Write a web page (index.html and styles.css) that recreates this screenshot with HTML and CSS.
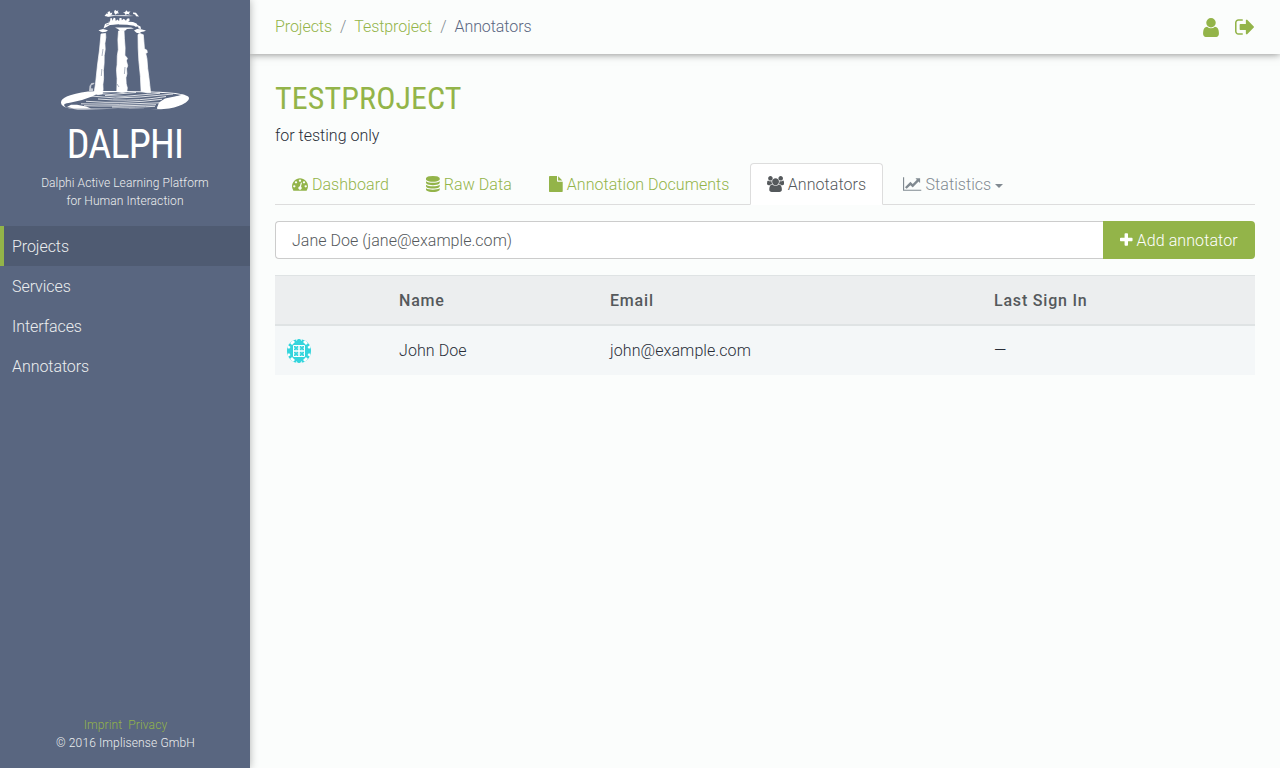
FILE: index.html
```html
<!DOCTYPE html>
<html lang="en">
<head>
<meta charset="utf-8">
<title>Testproject – Annotators</title>
<link rel="stylesheet" href="styles.css">
</head>
<body>
<aside class="sidebar">
  <svg class="logo" viewBox="0 0 150 120" width="150" height="120">
    <g fill="#fff">
    <path d="M54.500 16l2-2.500 1.500.3-.5-1.800 2.500-.8.300 2 2-.6-.5 2-2 .6 1.500.8-4 .4zM64 12l1-2.300 1.500 1.300 2-.6-.8 1.600 1.500 1.300-2.200.2-1.500 1.200-1-1.500zM73 12l2 .2 1.200-2 1.500 1.600 2.800-.3-1.600 1.700 1 1.300-2.800-.6-1.500 1-1-1.600zM83 12.500l3 .3 1.500 2 1.500 1.700-3-.3-.8-1.700-2-.4z"/>
    <path d="M56 15l3-.8 6 1 10-.2 9 1-5 .3-15-.4-6 1z" opacity=".75"/>
    <path d="M58 22l2-.5.5-3.500 1.500.3.500 2.500 1.200-3 1.500.3.600 3 1.500-1.600 1.800 1.600.4-3 2-.2.300 2.400 2-1.500 2.200 2 1-2 2.200-.6.500 2.400-1.700 1.500z"/>
    <path d="M53.500 28.500l1.500-4.600 5-1.800 12-.8 11 .8 3.500 1.400 1 1.500 3 1.500.5 2.500-2.500-.4-.4-2-2.600.2-1.500-1-7-1-9-.4-8 .7-3.500 2z"/>
    <path d="M48.500 30.300l4.500-1.300 5 1.200-2 1.500-3.500.5-2-.6zM65 27.500h16l3 1-7 .4-2 1.800-5 .2-2-2zM84 30.500l3-1.500 4 .3 5 1.200-2 1-3 .4-1.500 1.500-3-.6z"/>
    <g stroke="#fff" stroke-width=".7" stroke-linejoin="round">
    <path d="M51 34l4.600-.6.2 4-.9 6 .3 6-1 6-.1 8-.7 7 .2 8-.7 6 .2 5-.8 4.500-4.500.8-3.800-1.700 1.500-9 2-19 2-15z"/>
    <path d="M68.500 31l5.500-.2.4 8 .7 9-.2 7.500 2.500 3-1 2.500 1.300 5-1.200 3 .4 5-1 4 .3 6 1.100 4-.5 4-4.500.7-5.500-.8.200-9 .1-4-.6-9 .6-5 .2-9 1-6-.4-10z"/>
    <path d="M88 34.500l2-1 3.300 1.200.6 7 .5 7 2.500 1.500.4 2.400-1.600.8 1.200 5 .8 10 1.200 9 .9 8 .8 7.200-3.500.2-6-1.500-.7-15-1.500-15-.7-13z"/>
    </g>
    <path d="M39 91l.5-5 2-3 3-.3-.3 1.300-2.800 1.200-.4 3 2.200.2-.3 2.500z" opacity=".65"/>
    <path fill-rule="evenodd" d="M11 102.500c0-4.500 8-8.500 27-11l14-.5 22 0 28 .5c20 .6 37 2.500 37 6.500 0 5-13 10.700-28 11.200l-32-.7-44 1c-15 .3-24-2-24-7zm3.500 1.500c-1.500 3 3 4.500 11 4.600l53 .1 28.500.2 1-3 4-3.500 6-3.500 14-4-10-1.500-18-1-28-.4-26 .5-8 4-10 3.500-11 2.500c-4 .5-5.500 1-6.500 1.500z"/>
    <path d="M17 107l4-2.300 6 .1 9 1.800 5 2H24zM132 95l-17 3.500-6 4-2 5.500 14-.5 12-4 5-5z"/>
    </g>
    <g fill="none" stroke="#fff" stroke-width=".8">
    <path d="M43 93l18 1.500 25-2M41 96q24 3.500 49 1l33-3M48 99q30 2.500 54-.5l14-2M36 101.300q38 3 76-2M31 103.800q38 1.500 78-1M34 105.700q28 1 72-1M62 107q25 .5 43-.7M55 95.500l20 .8 35-3"/>
    </g>
    <g fill="none" stroke="#596680" stroke-width=".5">
    <path d="M53 49l-1 7M51.800 69l-.5 7M75 67l-.6 7M67 84l2 3M56 25l3-1M62 25.700l7-1.200"/>
    </g>
  </svg>
  <h1 class="brand">DALPHI</h1>
  <p class="tagline">Dalphi Active Learning Platform<br>for Human Interaction</p>
  <nav class="menu">
    <a class="menu-item active">Projects</a>
    <a class="menu-item">Services</a>
    <a class="menu-item">Interfaces</a>
    <a class="menu-item">Annotators</a>
  </nav>
  <footer class="foot"><div class="foot-links"><a>Imprint</a><a>Privacy</a></div>© 2016 Implisense GmbH</footer>
</aside>
<div class="page">
  <header class="topbar">
    <nav class="crumbs"><a>Projects</a><i>/</i><a>Testproject</a><i>/</i><span>Annotators</span></nav>
    <div class="actions">
      <svg viewBox="256 128 1280 1536" width="16" height="19"><path d="M1536 1399q0 109-62.500 187t-150.500 78h-854q-88 0-150.500-78t-62.500-187q0-85 8.500-160.500t31.500-152 58.500-131 94-89 134.500-34.500q131 128 313 128t313-128q76 0 134.500 34.500t94 89 58.500 131 31.500 152 8.500 160.500zm-256-887q0 159-112.500 271.500t-271.500 112.500-271.500-112.500-112.500-271.500 112.500-271.500 271.500-112.500 271.500 112.500 112.500 271.500z"/></svg>
      <svg viewBox="64 256 1568 1280" width="19" height="16"><path d="M704 1440q0 4 1 20t.5 26.500-3 23.500-10 19.500-20.500 6.500h-320q-119 0-203.500-84.500t-84.500-203.500v-704q0-119 84.500-203.500t203.500-84.500h320q13 0 22.500 9.500t9.500 22.500q0 4 1 20t.5 26.500-3 23.500-10 19.500-20.500 6.500h-320q-66 0-113 47t-47 113v704q0 66 47 113t113 47h312l11.500 1 11.500 3 8 5.500 7 9 2 13.500zm928-544q0 26-19 45l-544 544q-19 19-45 19t-45-19-19-45v-288h-448q-26 0-45-19t-19-45v-384q0-26 19-45t45-19h448v-288q0-26 19-45t45-19 45 19l544 544q19 19 19 45z"/></svg>
    </div>
  </header>
  <main class="content">
    <h2 class="title">TESTPROJECT</h2>
    <p class="lead">for testing only</p>
    <nav class="tabs">
      <a class="tab"><svg viewBox="0 0 1792 1792" width="16" height="16"><path d="M384 1152q0-53-37.500-90.500t-90.500-37.500-90.500 37.500-37.500 90.500 37.500 90.500 90.500 37.500 90.500-37.500 37.500-90.500zm192-448q0-53-37.500-90.500t-90.500-37.500-90.500 37.500-37.500 90.500 37.500 90.500 90.500 37.500 90.500-37.500 37.500-90.500zm428 481l101-382q6-26-7.500-48.500t-38.500-29.500-48 6.500-30 39.500l-101 382q-60 5-107 43.500t-63 98.500q-20 77 20 146t117 89 146-20 89-117q16-60-6-117t-72-91zm660-33q0-53-37.500-90.500t-90.500-37.500-90.500 37.500-37.500 90.500 37.500 90.500 90.500 37.500 90.500-37.500 37.500-90.500zm-640-640q0-53-37.500-90.500t-90.500-37.500-90.500 37.500-37.500 90.500 37.500 90.500 90.500 37.500 90.500-37.500 37.500-90.500zm448 192q0-53-37.500-90.500t-90.500-37.500-90.500 37.500-37.500 90.500 37.500 90.500 90.500 37.500 90.500-37.500 37.500-90.500zm320 448q0 261-141 483-19 29-54 29h-1402q-35 0-54-29-141-221-141-483 0-182 71-348t191-286 286-191 348-71 348 71 286 191 191 286 71 348z"/></svg> Dashboard</a>
      <a class="tab"><svg viewBox="128 0 1536 1792" width="13.710" height="16"><path d="M896 768q237 0 443-43t325-127v170q0 69-103 128t-280 93.500-385 34.500-385-34.500-280-93.500-103-128v-170q119 84 325 127t443 43zm0 768q237 0 443-43t325-127v170q0 69-103 128t-280 93.500-385 34.500-385-34.500-280-93.500-103-128v-170q119 84 325 127t443 43zm0-384q237 0 443-43t325-127v170q0 69-103 128t-280 93.500-385 34.500-385-34.500-280-93.500-103-128v-170q119 84 325 127t443 43zm0-1152q208 0 385 34.500t280 93.500 103 128v128q0 69-103 128t-280 93.500-385 34.500-385-34.500-280-93.500-103-128v-128q0-69 103-128t280-93.500 385-34.500z"/></svg> Raw Data</a>
      <a class="tab"><svg viewBox="128 0 1536 1792" width="13.710" height="16"><path d="M1152 512v-472q22 14 36 28l408 408q14 14 28 36h-472zm-128 32q0 40 28 68t68 28h544v1056q0 40-28 68t-68 28h-1344q-40 0-68-28t-28-68v-1600q0-40 28-68t68-28h800v544z"/></svg> Annotation Documents</a>
      <a class="tab active"><svg viewBox="0 0 1920 1792" width="17.140" height="16"><path d="M593 896q-162 5-265 128h-134q-82 0-138-40.500t-56-118.500q0-353 124-353 6 0 43.500 21t97.500 42.500 119 21.500q67 0 133-23-5 37-5 66 0 139 81 256zm1071 637q0 120-73 189.500t-194 69.500h-874q-121 0-194-69.500t-73-189.500q0-53 3.500-103.500t14-109 26.500-108.500 43-97.500 62-81 85.500-53.500 111.500-20q10 0 43 21.500t73 48 107 48 135 21.500 135-21.500 107-48 73-48 43-21.500q61 0 111.500 20t85.500 53.500 62 81 43 97.500 26.500 108.500 14 109 3.500 103.500zm-1024-1277q0 106-75 181t-181 75-181-75-75-181 75-181 181-75 181 75 75 181zm704 384q0 159-112.500 271.500t-271.500 112.500-271.500-112.500-112.500-271.500 112.500-271.500 271.500-112.500 271.500 112.500 112.500 271.500zm576 225q0 78-56 118.500t-138 40.500h-134q-103-123-265-128 81-117 81-256 0-29-5-66 66 23 133 23 59 0 119-21.500t97.500-42.500 43.500-21q124 0 124 353zm-128-609q0 106-75 181t-181 75-181-75-75-181 75-181 181-75 181 75 75 181z"/></svg> Annotators</a>
      <a class="tab muted"><svg viewBox="0 0 2048 1792" width="18.280" height="16"><path d="M2048 1536v128h-2048v-1536h128v1408h1920zm-128-1248v435q0 21-19.500 29.500t-35.500-7.500l-121-121-633 633q-10 10-23 10t-23-10l-233-233-416 416-192-192 585-585q10-10 23-10t23 10l233 233 464-464-121-121q-16-16-7.500-35.500t29.500-19.500h435q14 0 23 9t9 23z"/></svg> Statistics<span class="caret"></span></a>
    </nav>
    <form class="add">
      <div class="field">Jane Doe (jane@example.com)</div>
      <div class="button"><svg viewBox="192 0 1408 1792" width="12.570" height="16"><path d="M1600 736v192q0 40-28 68t-68 28h-416v416q0 40-28 68t-68 28h-192q-40 0-68-28t-28-68v-416h-416q-40 0-68-28t-28-68v-192q0-40 28-68t68-28h416v-416q0-40 28-68t68-28h192q40 0 68 28t28 68v416h416q40 0 68 28t28 68z"/></svg> Add annotator</div>
    </form>
    <table class="table">
      <colgroup><col class="c1"><col class="c2"><col class="c3"><col class="c4"></colgroup>
      <thead><tr><th></th><th>Name</th><th>Email</th><th>Last Sign In</th></tr></thead>
      <tbody><tr><td><svg class="avatar" viewBox="0 0 24 24" width="24" height="24">
        <clipPath id="round"><circle cx="12" cy="12" r="12"/></clipPath>
        <g clip-path="url(#round)"><path fill="#34d5dd" d="M0 0h24v24H0z"/>
        <path fill="#fff" d="M6 1l2 2-3 3-2-2zM18 1l-2 2 3 3 2-2zM6 23l2-2-3-3-2 2zM18 23l-2-2 3-3 2 2zM1 6l2.500 2L2 10 0 8zM23 6l-2.500 2 1.500 2 2-2zM1 18l2.500-2L2 14l-2 2zM23 18l-2.500-2 1.500-2 2 2zM9 0h2L9 2zM15 0h-2l2 2zM9 24h2l-2-2zM15 24h-2l2-2z"/>
        <path fill="none" stroke="#fff" d="M6.500 6.500h11v11h-11z"/>
        <path fill="none" stroke="#fff" d="M12 7v10M7 12h10" stroke-width="1.500"/>
        <path fill="#fff" opacity=".45" d="M8.500 7h1.500v1H8.500zM8.500 10.500H10v1H8.500zM7 8.500h1V10H7zM10.500 8.500h1V10h-1zM14 7h1.500v1H14zM14 10.500h1.500v1H14zM12.500 8.500h1V10h-1zM16 8.500h1V10h-1zM8.500 12.500H10v1H8.500zM8.500 16H10v1H8.500zM7 14h1v1.500H7zM10.500 14h1v1.500h-1zM14 12.500h1.500v1H14zM14 16h1.500v1H14zM12.500 14h1v1.500h-1zM16 14h1v1.500h-1z"/></g>
      </svg></td><td>John Doe</td><td>john@example.com</td><td>—</td></tr></tbody>
    </table>
  </main>
</div>
</body>
</html>
```
FILE: styles.css
```css
* { box-sizing: border-box; }
body { margin: 0; display: flex; height: 768px; overflow: hidden; background: #fbfdfc; color: #292e38; font: 300 16px/24px Roboto, sans-serif; }
h1, h2, p { margin: 0; }
svg { fill: currentColor; }
.sidebar { width: 250px; height: 768px; display: flex; flex-direction: column; align-items: center; background: #596680; color: #fff; box-shadow: 0 0 8px rgba(0,0,0,.3); z-index: 1; }
.logo { flex: none; }
.brand { font: 400 40px/44px "Roboto Condensed", Roboto, sans-serif; font-stretch: condensed; letter-spacing: -.85px; margin-top: 3px; }
.tagline { font-size: 12px; line-height: 18px; text-align: center; margin-top: 7px; color: #eceeef; letter-spacing: .08px; }
.menu { align-self: stretch; display: flex; flex-direction: column; margin-top: 16px; }
.menu-item { height: 40px; padding: 9px 12px 7px; color: #eceeef; letter-spacing: -.06px; }
.menu-item.active { background: #4f5b72; border-left: 4px solid #93b449; padding-left: 8px; }
.foot { margin-top: auto; padding-bottom: 16px; padding-left: 1px; font-size: 12px; line-height: 18px; text-align: center; color: #eceeef; letter-spacing: .13px; }
.foot-links { display: flex; justify-content: center; gap: 6px; color: #93b449; }
.page { flex: 1; }
.topbar { height: 54px; display: flex; justify-content: space-between; padding: 0 26px 0 25px; box-shadow: 0 0 8px rgba(0,0,0,.5); background: #fbfdfc; }
.crumbs { display: flex; gap: 8px; padding-top: 15px; color: #93b449; letter-spacing: -.07px; }
.crumbs i { font-style: normal; color: #818a91; }
.crumbs span { color: #596680; }
.actions { display: flex; align-items: center; gap: 16px; color: #93b449; }
.content { padding: 27px 25px 0; }
.title { font: 400 32px/35px "Roboto Condensed", Roboto, sans-serif; font-stretch: condensed; letter-spacing: .1px; color: #93b449; }
.lead { margin-top: 8px; }
.tabs { display: flex; margin-top: 15px; border-bottom: 1px solid #ddd; gap: 3.3px; height: 42px; }
.tab { height: 42px; padding: 9px 16px 7px; border: 1px solid transparent; color: #93b449; white-space: nowrap; letter-spacing: .05px; }
.tab svg, .button svg { vertical-align: -2px; }
.tab.active { background: #fff; color: #55595c; border-color: #ddd #ddd #fff; border-radius: 4px 4px 0 0; }
.tab.muted { color: #818a91; }
.caret { display: inline-block; margin-left: 4px; vertical-align: middle; border-top: 4px solid; border-left: 4px solid transparent; border-right: 4px solid transparent; }
.add { display: flex; height: 38px; margin: 16px 0; }
.field { flex: 1; padding: 7px 16px 5px; background: #fff; border: 1px solid #ccc; border-right: 0; border-radius: 4px 0 0 4px; color: #55595c; letter-spacing: .04px; }
.button { width: 152px; padding: 8px 0 6px 17px; background: #93b449; color: #fff; border-radius: 0 4px 4px 0; letter-spacing: .1px; white-space: nowrap; }
.table { width: 980px; table-layout: fixed; border-collapse: separate; border-spacing: 0; }
.c1 { width: 112px; }
.c2 { width: 211px; }
.c3 { width: 384px; }
.c4 { width: 273px; }
.table th { height: 51px; }
.table td { height: 49px; }
.table th, .table td { padding: 0 12px; text-align: left; }
.table th { padding-top: 2px; background: #eceeef; color: #55595c; font-weight: 500; letter-spacing: .8px; border-top: 1px solid #dfe3e4; border-bottom: 2px solid #dfe3e4; }
.table td { background: #f4f7f8; letter-spacing: .08px; }
.avatar { display: block; }
```
